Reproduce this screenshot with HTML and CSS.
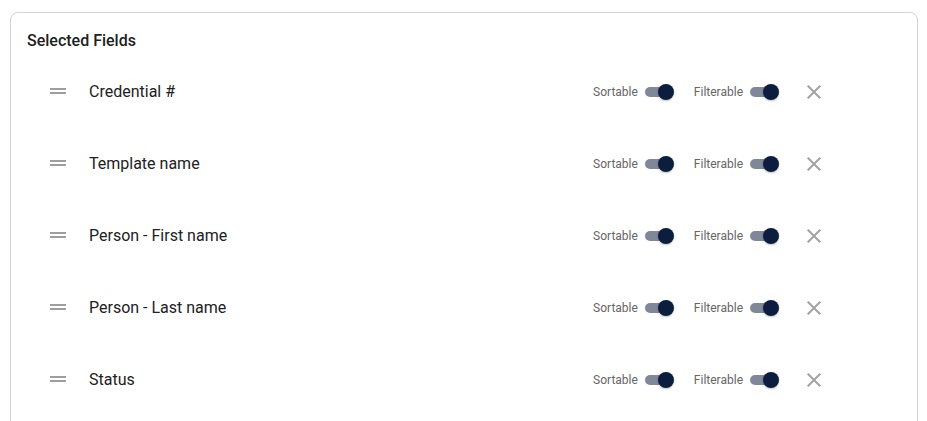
FILE: index.html
```html
<!DOCTYPE html>
<html>
<head>
<meta charset="utf-8">
<link rel="stylesheet" href="styles.css">
</head>
<body>
<div class="card">
  <div class="title">Selected Fields</div>
  <ul class="list">
    <li class="row">
      <svg class="handle" viewBox="0 0 24 24"><path d="M20 9H4v2h16V9zM4 15h16v-2H4v2z"/></svg>
      <span class="name">Credential #</span>
      <div class="controls">
        <span class="lbl">Sortable</span><span class="switch"><span class="track"></span><span class="thumb"></span></span>
        <span class="lbl lbl2">Filterable</span><span class="switch"><span class="track"></span><span class="thumb"></span></span>
        <span class="close"><svg viewBox="0 0 24 24"><path d="M19 6.41 17.59 5 12 10.59 6.41 5 5 6.41 10.59 12 5 17.59 6.41 19 12 13.41 17.59 19 19 17.59 13.41 12z"/></svg></span>
      </div>
    </li>
    <li class="row">
      <svg class="handle" viewBox="0 0 24 24"><path d="M20 9H4v2h16V9zM4 15h16v-2H4v2z"/></svg>
      <span class="name">Template name</span>
      <div class="controls">
        <span class="lbl">Sortable</span><span class="switch"><span class="track"></span><span class="thumb"></span></span>
        <span class="lbl lbl2">Filterable</span><span class="switch"><span class="track"></span><span class="thumb"></span></span>
        <span class="close"><svg viewBox="0 0 24 24"><path d="M19 6.41 17.59 5 12 10.59 6.41 5 5 6.41 10.59 12 5 17.59 6.41 19 12 13.41 17.59 19 19 17.59 13.41 12z"/></svg></span>
      </div>
    </li>
    <li class="row">
      <svg class="handle" viewBox="0 0 24 24"><path d="M20 9H4v2h16V9zM4 15h16v-2H4v2z"/></svg>
      <span class="name">Person - First name</span>
      <div class="controls">
        <span class="lbl">Sortable</span><span class="switch"><span class="track"></span><span class="thumb"></span></span>
        <span class="lbl lbl2">Filterable</span><span class="switch"><span class="track"></span><span class="thumb"></span></span>
        <span class="close"><svg viewBox="0 0 24 24"><path d="M19 6.41 17.59 5 12 10.59 6.41 5 5 6.41 10.59 12 5 17.59 6.41 19 12 13.41 17.59 19 19 17.59 13.41 12z"/></svg></span>
      </div>
    </li>
    <li class="row">
      <svg class="handle" viewBox="0 0 24 24"><path d="M20 9H4v2h16V9zM4 15h16v-2H4v2z"/></svg>
      <span class="name">Person - Last name</span>
      <div class="controls">
        <span class="lbl">Sortable</span><span class="switch"><span class="track"></span><span class="thumb"></span></span>
        <span class="lbl lbl2">Filterable</span><span class="switch"><span class="track"></span><span class="thumb"></span></span>
        <span class="close"><svg viewBox="0 0 24 24"><path d="M19 6.41 17.59 5 12 10.59 6.41 5 5 6.41 10.59 12 5 17.59 6.41 19 12 13.41 17.59 19 19 17.59 13.41 12z"/></svg></span>
      </div>
    </li>
    <li class="row">
      <svg class="handle" viewBox="0 0 24 24"><path d="M20 9H4v2h16V9zM4 15h16v-2H4v2z"/></svg>
      <span class="name">Status</span>
      <div class="controls">
        <span class="lbl">Sortable</span><span class="switch"><span class="track"></span><span class="thumb"></span></span>
        <span class="lbl lbl2">Filterable</span><span class="switch"><span class="track"></span><span class="thumb"></span></span>
        <span class="close"><svg viewBox="0 0 24 24"><path d="M19 6.41 17.59 5 12 10.59 6.41 5 5 6.41 10.59 12 5 17.59 6.41 19 12 13.41 17.59 19 19 17.59 13.41 12z"/></svg></span>
      </div>
    </li>
  </ul>
</div>
</body>
</html>
```
FILE: styles.css
```css
html, body {
  margin: 0;
  padding: 0;
  background: #ffffff;
  font-family: Roboto, "Liberation Sans", sans-serif;
  overflow: hidden;
}
.card {
  margin: 12px 0 0 10px;
  width: 908px;
  height: 460px;
  box-sizing: border-box;
  border: 1px solid #d4d4d4;
  border-radius: 8px;
  padding: 16px;
}
.title {
  font-size: 16px;
  font-weight: 500;
  line-height: 24px;
  color: #212121;
}
.list {
  list-style: none;
  margin: 2px 0 0 0;
  padding: 0;
}
.row {
  display: flex;
  align-items: center;
  height: 72px;
  padding-left: 19px;
}
.handle {
  width: 24px;
  height: 24px;
  fill: #9e9e9e;
  flex: none;
}
.name {
  margin-left: 19px;
  font-size: 16px;
  color: #212121;
  flex: 1;
}
.controls {
  display: flex;
  align-items: center;
  margin-right: 67px;
  margin-top: 2px;
}
.lbl {
  font-size: 12px;
  color: #666666;
}
.lbl2 {
  margin-left: 16px;
}
.switch {
  position: relative;
  width: 40px;
  height: 24px;
  flex: none;
}
.track {
  position: absolute;
  left: 7px;
  top: 7px;
  width: 26px;
  height: 10px;
  border-radius: 5px;
  background: #7f8799;
}
.thumb {
  position: absolute;
  left: 20px;
  top: 4px;
  width: 16px;
  height: 16px;
  border-radius: 50%;
  background: #0c1d3e;
  box-shadow: 0 1px 2px rgba(0,0,0,0.25);
}
.close {
  margin-left: 11px;
  width: 40px;
  height: 40px;
  display: flex;
  align-items: center;
  justify-content: center;
}
.close svg {
  width: 24px;
  height: 24px;
  fill: #a3a3a3;
}
```
